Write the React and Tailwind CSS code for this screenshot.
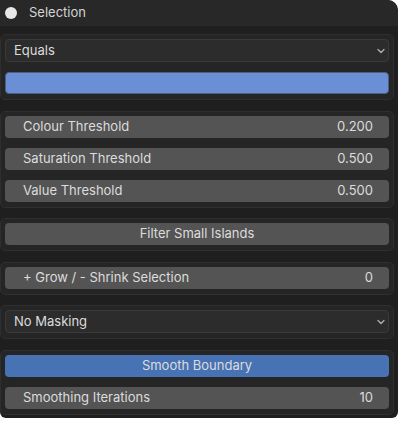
import { ChevronDown } from 'lucide-react';

const font = { fontFamily: 'Inter, "Noto Sans", sans-serif' };

function Box({ children, className = '' }) {
  return (
    <div className={`rounded-[5px] border border-[#2f2f2f] bg-[#252525] px-[4px] pt-[4px] pb-[5px] flex flex-col gap-[10px] ${className}`}>
      {children}
    </div>
  );
}

function Slider({ label, value }) {
  return (
    <div className="h-[22px] shrink-0 rounded-[4px] bg-[#545454] flex items-center justify-between pl-[18px] pr-[16px] text-[13px] text-[#dcdcdc]">
      <span>{label}</span>
      <span>{value}</span>
    </div>
  );
}

function Button({ label, blue }) {
  return (
    <div className={`h-[22px] shrink-0 rounded-[4px] flex items-center justify-center text-[13px] text-[#dcdcdc] ${blue ? 'bg-[#4772b3]' : 'bg-[#545454]'}`}>
      {label}
    </div>
  );
}

function Dropdown({ label }) {
  return (
    <div className="h-[23px] shrink-0 rounded-[4px] border border-[#3a3a3a] bg-[#2c2c2c] flex items-center justify-between pl-[8px] pr-[1px] text-[13px] text-[#dcdcdc]">
      <span>{label}</span>
      <ChevronDown size={12} strokeWidth={2.5} className="text-[#b0b0b0]" />
    </div>
  );
}

export default function App() {
  return (
    <div className="w-[400px] h-[421px] bg-white overflow-hidden" style={font}>
      <div className="w-[398px] h-[418px] bg-[#1f1f1f] rounded-tr-[10px] rounded-b-[6px] flex flex-col overflow-hidden">
        <div className="h-[26px] shrink-0 bg-[#282828] rounded-tr-[10px] flex items-center pl-[5px] gap-[12px]">
          <span className="w-[12px] h-[12px] rounded-full bg-[#e8e8e8]" />
          <span className="text-[13px] text-[#d4d4d4]">Selection</span>
        </div>
        <div className="flex flex-col pt-[8px] pr-[4px]">
          <Box>
            <Dropdown label="Equals" />
            <div className="h-[22px] shrink-0 rounded-[4px] bg-[#6a8fd6] border border-[#4d5f7e]" />
          </Box>
          <Box className="mt-[11px]">
            <Slider label="Colour Threshold" value="0.200" />
            <Slider label="Saturation Threshold" value="0.500" />
            <Slider label="Value Threshold" value="0.500" />
          </Box>
          <Box className="mt-[10px]">
            <Button label="Filter Small Islands" />
          </Box>
          <Box className="mt-[11px]">
            <Slider label="+ Grow / - Shrink Selection" value="0" />
          </Box>
          <Box className="mt-[10px]">
            <Dropdown label="No Masking" />
          </Box>
          <Box className="mt-[11px]">
            <Button label="Smooth Boundary" blue />
            <Slider label="Smoothing Iterations" value="10" />
          </Box>
        </div>
      </div>
    </div>
  );
}
